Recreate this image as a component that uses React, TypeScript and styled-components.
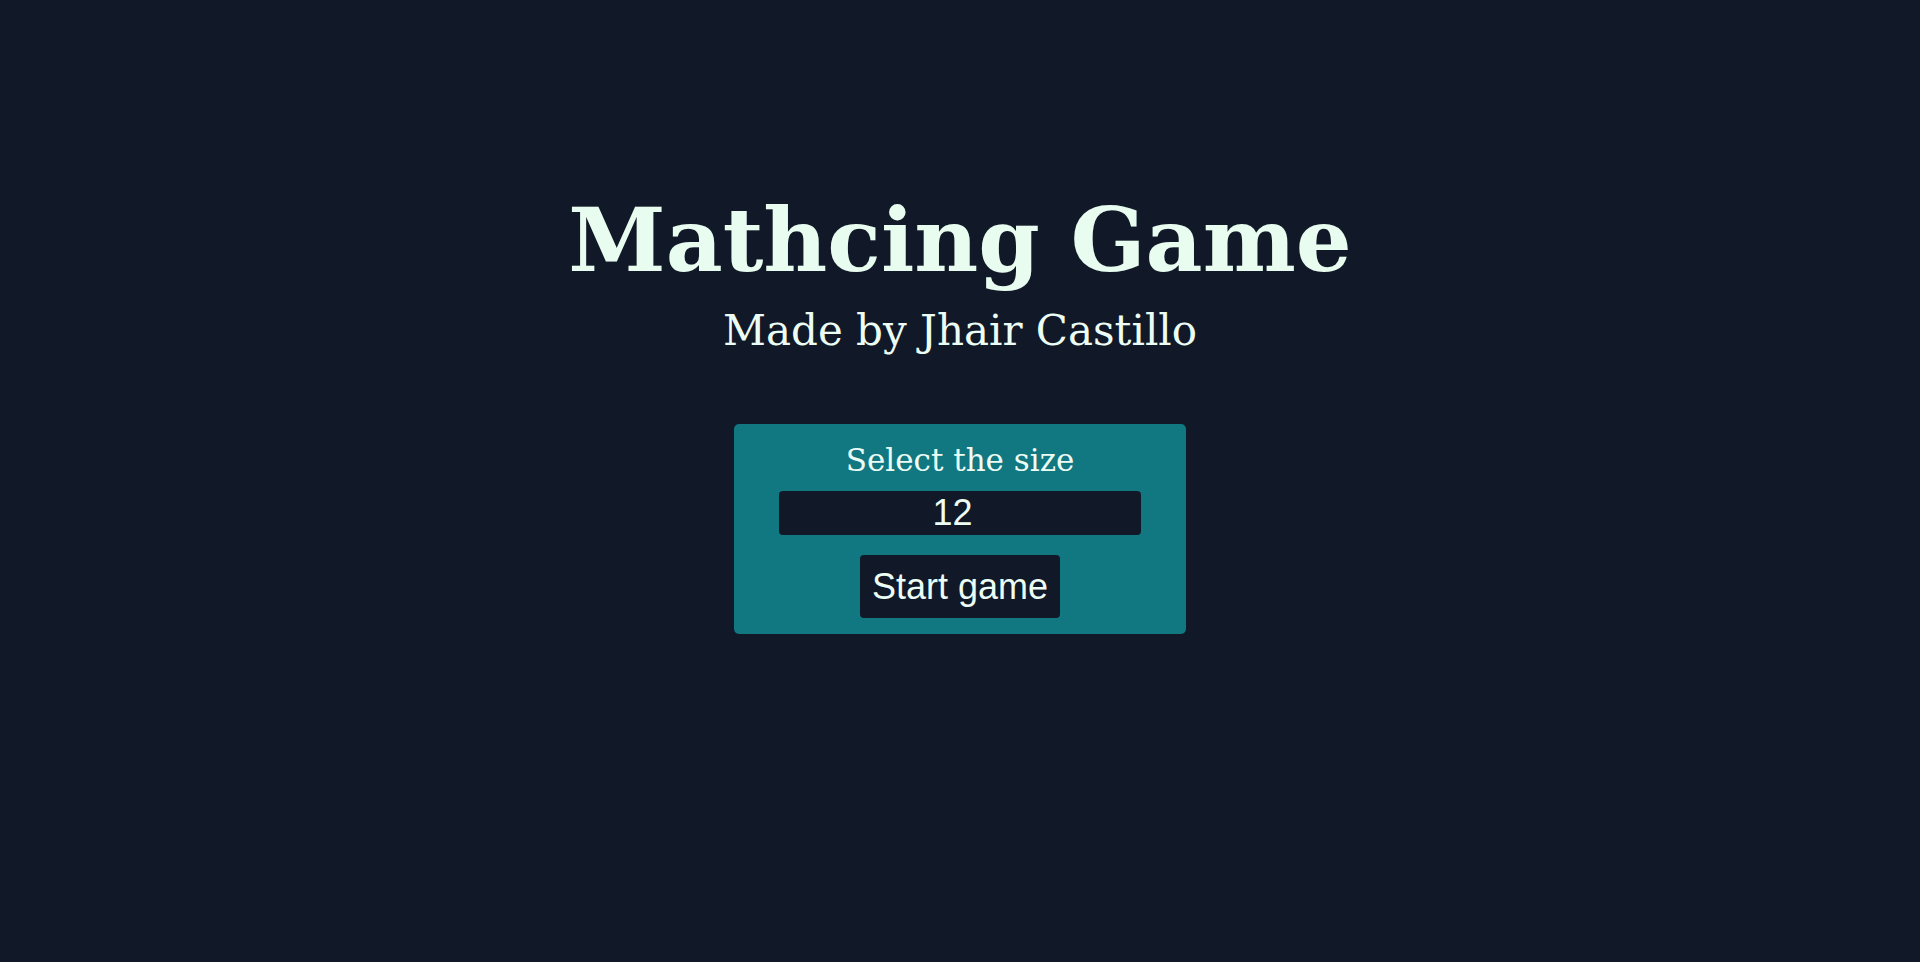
import React, { useState } from "react";
import styled, { createGlobalStyle } from "styled-components";

const GlobalStyle = createGlobalStyle`
  html, body {
    margin: 0;
    padding: 0;
    background: #111827;
  }
  body {
    font-family: "DejaVu Serif", "Liberation Serif", serif;
    color: #ecfdf5;
  }
  input[type="number"]::-webkit-inner-spin-button {
    opacity: 0;
  }
`;

const Page = styled.main`
  min-height: 962px;
  box-sizing: border-box;
  padding-top: 188px;
  display: flex;
  flex-direction: column;
  align-items: center;
  background: #111827;
`;

const Title = styled.h1`
  margin: 0;
  font-family: "DejaVu Serif", serif;
  font-weight: 700;
  font-size: 88px;
  line-height: normal;
  color: #e8fdf0;
  letter-spacing: 0;
`;

const Subtitle = styled.h2`
  margin: 14px 0 0;
  font-family: "DejaVu Serif", serif;
  font-weight: 400;
  font-size: 42px;
  line-height: normal;
  color: #ecfdf5;
`;

const Panel = styled.section`
  margin-top: 69px;
  width: 452px;
  box-sizing: border-box;
  padding: 18px 0 16px;
  background: #117781;
  border-radius: 5px;
  display: flex;
  flex-direction: column;
  align-items: center;
`;

const Label = styled.label`
  font-family: "DejaVu Serif", serif;
  font-size: 31px;
  line-height: 36px;
  color: #ecfdf5;
`;

const SizeInput = styled.input`
  margin-top: 13px;
  width: 362px;
  height: 44px;
  box-sizing: border-box;
  border: none;
  border-radius: 4px;
  padding: 1px 2px;
  background: #111827;
  color: #ecfdf5;
  font-family: "Liberation Sans", Arial, sans-serif;
  font-size: 36px;
  text-align: center;
  outline: none;
`;

const StartButton = styled.button`
  margin-top: 20px;
  height: 63px;
  padding: 0 12px;
  border: none;
  border-radius: 4px;
  background: #111827;
  color: #ecfdf5;
  font-family: "Liberation Sans", Arial, sans-serif;
  font-size: 36px;
  line-height: normal;
  cursor: pointer;
`;

export default function App() {
  const [size, setSize] = useState("12");
  return (
    <>
      <GlobalStyle />
      <Page>
        <Title>Mathcing Game</Title>
        <Subtitle>Made by Jhair Castillo</Subtitle>
        <Panel>
          <Label htmlFor="size">Select the size</Label>
          <SizeInput
            id="size"
            type="number"
            value={size}
            onChange={(e) => setSize(e.target.value)}
          />
          <StartButton>Start game</StartButton>
        </Panel>
      </Page>
    </>
  );
}
